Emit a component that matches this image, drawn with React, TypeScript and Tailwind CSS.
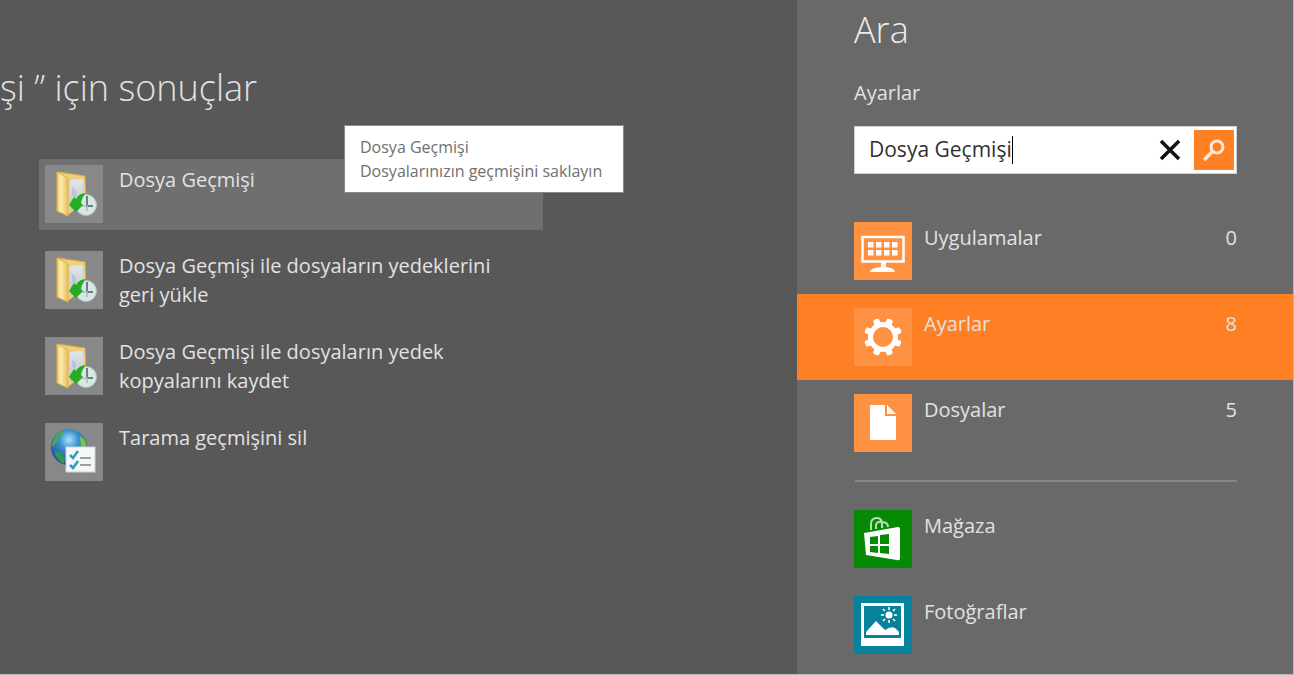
import React, { useState } from 'react';

const FolderHistoryIcon: React.FC = () => (
  <svg viewBox="0 0 58 58" className="w-full h-full" aria-hidden="true">
    <defs>
      <linearGradient id="flap" x1="0" y1="0" x2="1" y2="0">
        <stop offset="0" stopColor="#efc860" />
        <stop offset="0.35" stopColor="#ffecae" />
        <stop offset="1" stopColor="#e6bd60" />
      </linearGradient>
      <linearGradient id="sheet" x1="0" y1="0" x2="0" y2="1">
        <stop offset="0" stopColor="#e2e6ea" />
        <stop offset="1" stopColor="#b9c3cc" />
      </linearGradient>
    </defs>
    <path d="M13 7 L40 11 L41 35 L23 50 Z" fill="#f1d07c" stroke="#d9ab48" />
    <path d="M25 15 L38 14 L38 40 L25 45 Z" fill="url(#sheet)" />
    <path d="M27 22 l4 4 v7 l-4 -3 Z" fill="#b4c6db" />
    <path d="M12 7 L23 13 V51 L12 46 Z" fill="url(#flap)" stroke="#dfb44c" />
    <circle cx="41" cy="40" r="10.500" fill="#d9e6e6" stroke="#b4c0c2" />
    <path d="M42 31 V41 H48" fill="none" stroke="#66817f" strokeWidth="2" />
    <path d="M37 41 H42 V46" fill="none" stroke="#a9bcbb" strokeWidth="1.500" />
    <path d="M24 40 L29 32 L31 34 Q34 28 41 28 Q37 32 36 38 L38 40 L31 47 Z" fill="#25ad22" />
  </svg>
);

const GlobeListIcon: React.FC = () => (
  <svg viewBox="0 0 58 58" className="w-full h-full" aria-hidden="true">
    <defs>
      <radialGradient id="globe" cx="0.5" cy="0.3" r="0.75">
        <stop offset="0" stopColor="#a6e4f7" />
        <stop offset="0.35" stopColor="#3b93cf" />
        <stop offset="1" stopColor="#173a8c" />
      </radialGradient>
    </defs>
    <circle cx="24" cy="24" r="18" fill="url(#globe)" />
    <path d="M7 22 Q9 11 18 8 L19 10 L14 14 L12 19 L8 24 Z" fill="#4da944" />
    <path d="M9 28 L16 30 L20 35 L19 41 Q11 37 9 28 Z" fill="#2f9a52" />
    <path d="M35 13 L39 16 Q42 20 41 26 L36 24 Z" fill="#7fc143" />
    <rect x="21" y="24" width="29" height="25" fill="#f6f8f8" stroke="#cdd3d5" />
    <path d="M25 32 l3 3 l5 -7 M25 42 l3 3 l5 -7" fill="none" stroke="#2f9cc0" strokeWidth="2.500" />
    <path d="M35 35 H46 M35 42 H46" stroke="#7c8587" strokeWidth="1.500" />
  </svg>
);

const AppsIcon: React.FC = () => (
  <svg viewBox="0 0 58 58" className="w-full h-full" fill="#fff" aria-hidden="true">
    <rect x="8.500" y="15" width="41" height="24.500" fill="none" stroke="#fff" strokeWidth="2.500" />
    {[14, 22, 30, 38].map(x => (
      <React.Fragment key={x}>
        <rect x={x} y="20" width="5.500" height="5.500" />
        <rect x={x} y="28" width="5.500" height="5.500" />
      </React.Fragment>
    ))}
    <path d="M27 40 H32 V45 Q41 46 41 50 H16 Q16 46 27 45 Z" />
  </svg>
);

const GearIcon: React.FC = () => (
  <svg viewBox="0 0 58 58" className="w-full h-full" aria-hidden="true">
    <circle cx="29" cy="29" r="12.500" fill="none" stroke="#fff" strokeWidth="5" />
    {[0, 1, 2, 3, 4, 5, 6, 7].map(n => (
      <path
        key={n}
        d="M25.500 17 L26 10.500 Q29 9 32 10.500 L32.500 17 Z"
        fill="#fff"
        transform={`rotate(${22.5 + n * 45} 29 29)`}
      />
    ))}
  </svg>
);

const FileIcon: React.FC = () => (
  <svg viewBox="0 0 58 58" className="w-full h-full" fill="#fff" aria-hidden="true">
    <path d="M16 11 H31 V22 H42 V46 H16 Z" />
    <path d="M33 11 L42 20 H33 Z" />
  </svg>
);

const StoreIcon: React.FC = () => (
  <svg viewBox="0 0 58 58" className="w-full h-full" aria-hidden="true">
    <path d="M17 20 V14 Q17 8 23 8 Q28 8 28 14 V18 M22 19 V15 Q23 11 28 12 Q34 12 34 17" fill="none" stroke="#b5deb2" strokeWidth="2" />
    <path d="M10 23 L44 17 Q46 17 46 19 V48 Q46 51 43 50 L12 45 Z" fill="#fff" />
    <path d="M16 27 L24 26 V34 H16 Z M26 25 L35 24 V34 H26 Z M16 36 H24 V43 L16 42 Z M26 36 H35 V44 L26 43 Z" fill="#068a06" />
  </svg>
);

const PhotosIcon: React.FC = () => (
  <svg viewBox="0 0 58 58" className="w-full h-full" aria-hidden="true">
    <rect x="7" y="7" width="43" height="43" fill="#fff" />
    <rect x="10" y="10" width="37" height="32" fill="#08829c" />
    <path d="M12 39 V36 L22 25 L31 34 Q37 30 41 32 L45 36 V39 Z" fill="#fff" />
    <circle cx="35" cy="19" r="3.500" fill="#fff" />
    <path d="M35 11 V14 M35 24 V27 M27 19 H30 M40 19 H43 M29 13 L31 15 M39 23 L41 25 M41 13 L39 15 M31 23 L29 25" stroke="#fff" strokeWidth="1.500" />
  </svg>
);

const results = [
  { title: 'Dosya Geçmişi', icon: FolderHistoryIcon, tip: 'Dosyalarınızın geçmişini saklayın' },
  { title: 'Dosya Geçmişi ile dosyaların yedeklerini geri yükle', icon: FolderHistoryIcon },
  { title: 'Dosya Geçmişi ile dosyaların yedek kopyalarını kaydet', icon: FolderHistoryIcon },
  { title: 'Tarama geçmişini sil', icon: GlobeListIcon },
];

const scopes = [
  { name: 'Uygulamalar', count: 0, icon: AppsIcon },
  { name: 'Ayarlar', count: 8, icon: GearIcon },
  { name: 'Dosyalar', count: 5, icon: FileIcon },
];

const apps = [
  { name: 'Mağaza', icon: StoreIcon, color: 'bg-[#068a06]' },
  { name: 'Fotoğraflar', icon: PhotosIcon, color: 'bg-[#08829c]' },
];

const App: React.FC = () => {
  const [query, setQuery] = useState('Dosya Geçmişi');
  const [scope, setScope] = useState('Ayarlar');

  return (
    <div className="min-h-screen flex bg-[#585858] text-[#e2e2e2] text-xl font-['Open_Sans','Noto_Sans',sans-serif] border-r border-b border-[#b8b8b8] overflow-x-hidden">
      <main className="flex-1 min-w-0">
        <h1 className="pt-16 text-4xl leading-12 font-light whitespace-nowrap">şi ” için sonuçlar</h1>

        <ul className="mt-[47px] ml-[39px] w-[504px] flex flex-col gap-[15px]">
          {results.map((r, i) => (
            <li key={r.title} className="relative">
              <button className={`w-full min-h-[71px] p-[6px] pr-8 flex items-start gap-4 text-left ${i === 0 ? 'bg-[#6f6f6f]' : ''}`}>
                <span className="w-[58px] h-[58px] shrink-0 bg-[#888888]"><r.icon /></span>
                <span className="leading-[29px]">{r.title}</span>
              </button>
              {r.tip && (
                <div role="tooltip" className="absolute left-[305px] -top-[34px] z-10 w-70 bg-white border border-[#8a8a8a] px-[15px] py-[9px] text-base leading-6 text-[#707070] whitespace-nowrap">
                  <p>{r.title}</p>
                  <p>{r.tip}</p>
                </div>
              )}
            </li>
          ))}
        </ul>
      </main>

      <aside className="w-[496px] shrink-0 bg-[#696969]">
        <div className="pl-[57px] pr-14">
          <h2 className="pt-1.5 text-4xl leading-12 font-light text-[#ececec]">Ara</h2>
          <label htmlFor="search" className="block mt-6 leading-[30px]">{scope}</label>

          <form className="mt-[18px] h-12 flex items-center bg-white border border-[#d0d0d0] p-[2px]" onSubmit={e => e.preventDefault()}>
            <div className="flex-1 min-w-0 flex items-center pl-3">
              <input
                id="search"
                type="text"
                value={query}
                onChange={e => setQuery(e.target.value)}
                className="field-sizing-content max-w-full text-[21px] text-[#303030] caret-transparent outline-none"
              />
              <span className="w-px h-7 bg-black" />
            </div>
            <button type="button" aria-label="Temizle" onClick={() => setQuery('')} className="w-12 h-full flex items-center justify-center">
              <svg viewBox="0 0 22 22" className="w-[22px] h-[22px]" aria-hidden="true">
                <path d="M2 2 L20 20 M20 2 L2 20" stroke="#111" strokeWidth="3.500" />
              </svg>
            </button>
            <button type="submit" aria-label="Ara" className="w-10 h-10 flex items-center justify-center bg-[#ff7f24]">
              <svg viewBox="0 0 24 24" className="w-6 h-6" fill="none" stroke="#ffe9d6" aria-hidden="true">
                <circle cx="15" cy="9" r="6" strokeWidth="3" />
                <path d="M11 13 L2 22" strokeWidth="3.500" />
              </svg>
            </button>
          </form>
        </div>

        <nav className="mt-[34px]">
          {scopes.map(s => (
            <button
              key={s.name}
              onClick={() => setScope(s.name)}
              className={`w-full h-[86px] pt-3.5 pl-[57px] pr-14 flex items-start text-left ${scope === s.name ? 'bg-[#ff7f24]' : ''}`}
            >
              <span className="w-[58px] h-[58px] shrink-0 bg-[#ff9142]"><s.icon /></span>
              <span className="flex-1 ml-3 leading-8">{s.name}</span>
              <span className="leading-8">{s.count}</span>
            </button>
          ))}
          <hr className="ml-[58px] mr-14 my-[14px] border-t-2 border-[#858585]" />
          {apps.map(a => (
            <button key={a.name} className="w-full h-[86px] pt-3.5 pl-[57px] pr-14 flex items-start text-left">
              <span className={`w-[58px] h-[58px] shrink-0 ${a.color}`}><a.icon /></span>
              <span className="ml-3 leading-8">{a.name}</span>
            </button>
          ))}
        </nav>
      </aside>
    </div>
  );
};

export default App;
